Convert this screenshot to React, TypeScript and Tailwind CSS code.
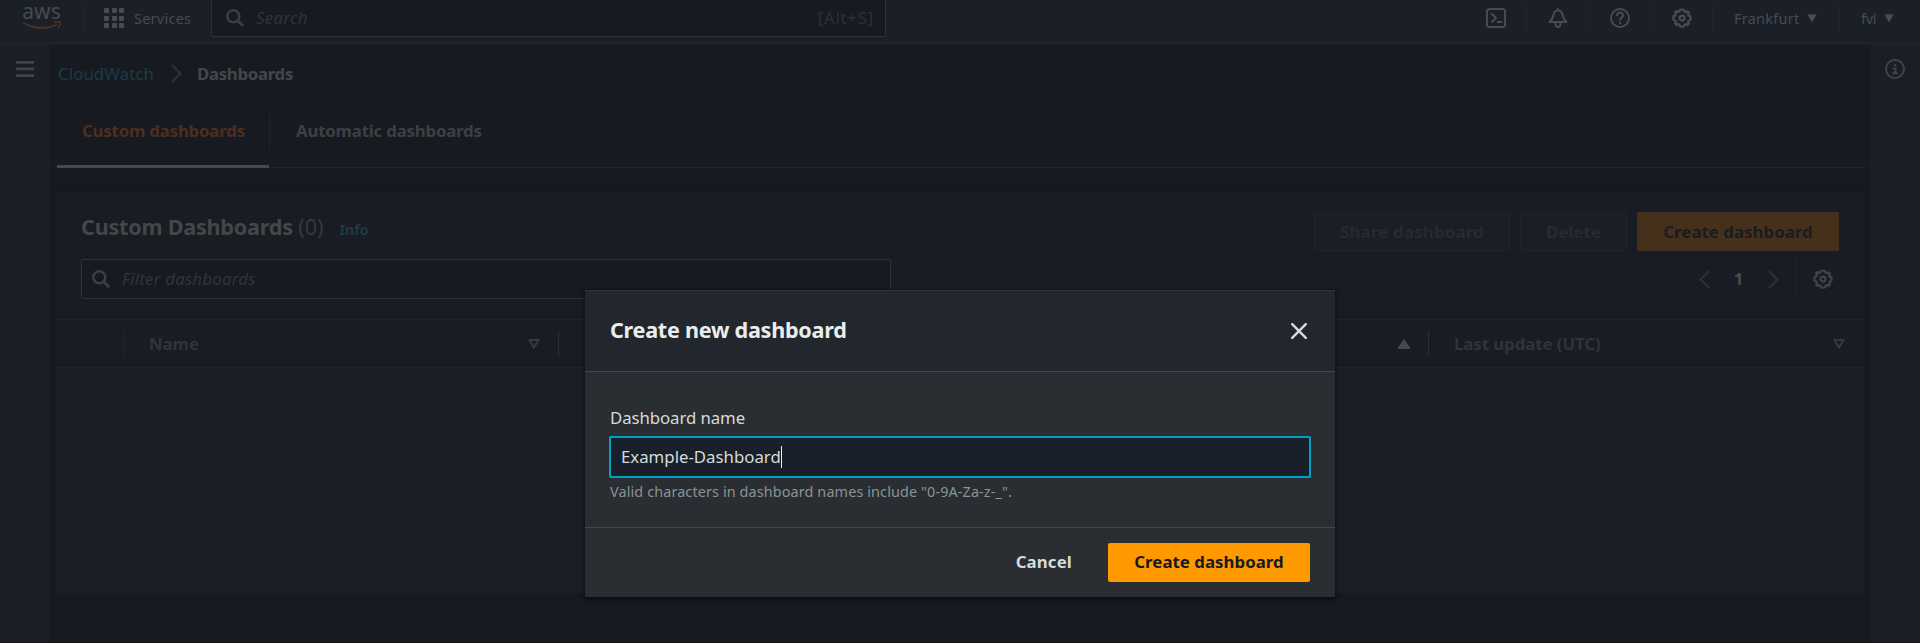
import type { ReactNode } from 'react';

const GEAR =
  'M8 1.2l1.5.3.5 1.3 1.1.5 1.3-.6 1.1 1.1-.6 1.3.5 1.1 1.3.5.3 1.3-.3 1.5-1.3.5-.5 1.1.6 1.3-1.1 1.1-1.3-.6-1.1.5-.5 1.3L8 15l-1.5-.3-.5-1.3-1.1-.5-1.3.6-1.1-1.1.6-1.3-.5-1.1-1.3-.5L1 8l.3-1.5 1.3-.5.5-1.1-.6-1.3 1.1-1.1 1.3.6L6 2.6l.5-1.1z';

function GearIcon({ className }: { className: string }) {
  return (
    <svg viewBox="0 0 16 16" className={`size-5 shrink-0 ${className}`} fill="none" stroke="currentColor" strokeWidth="1.8" strokeLinejoin="round">
      <path d={GEAR} />
      <circle cx="8" cy="8" r="2" />
    </svg>
  );
}

function SearchIcon({ className }: { className: string }) {
  return (
    <svg viewBox="0 0 18 18" className={`size-[18px] shrink-0 ${className}`} fill="none" stroke="currentColor" strokeWidth="2.4">
      <circle cx="7.3" cy="7.3" r="6" />
      <path d="M11.6 11.6L17 17" strokeWidth="2.8" />
    </svg>
  );
}

function Chevron({ left = false, className }: { left?: boolean; className: string }) {
  return (
    <svg viewBox="0 0 11 19" className={`h-[19px] w-[11px] shrink-0 ${className}`} fill="none" stroke="currentColor" strokeWidth="2.4">
      <path d={left ? 'M10 1L1.6 9.5L10 18' : 'M1 1L9.4 9.5L1 18'} />
    </svg>
  );
}

function SortDown() {
  return (
    <svg viewBox="0 0 12 10" className="h-2.5 w-3 shrink-0 text-[#373a3d]" fill="none" stroke="currentColor" strokeWidth="2" strokeLinejoin="round">
      <path d="M1.4 1H10.6L6 8.6z" />
    </svg>
  );
}

function CaretDown() {
  return (
    <svg viewBox="0 0 10 9" className="h-[9px] w-2.5 shrink-0" fill="currentColor">
      <path d="M.3 0.3H9.7L5 8.6z" />
    </svg>
  );
}

function NavItem({ className, children }: { className: string; children: ReactNode }) {
  return <div className={`flex h-7 items-center border-l border-[#20242b] ${className}`}>{children}</div>;
}

function TopBar() {
  return (
    <header className="flex h-11 shrink-0 items-start border-b border-[#22252d] bg-[#1b1f27] text-[#484b4f]">
      <div className="flex h-9 w-[83px] items-start pl-[22px]">
        <div className="flex w-[39px] flex-col items-center">
          <span className="h-[21px] text-[21px] leading-[22px] tracking-[0.1px]">aws</span>
          <svg viewBox="0 0 39 10" className="h-2.5 w-[39px] text-[#47351f]" fill="none" stroke="currentColor" strokeWidth="1.6">
            <path d="M.4 1.2C11 9.4 25 9.4 35 3.6C25 7.6 12 7.4 .4 1.2z" fill="currentColor" strokeWidth="1" />
            <path d="M32 1.2C35 .4 37.5 .6 38 1.2C38.4 2.2 37.6 5 35.8 7" />
          </svg>
        </div>
      </div>
      <div className="mt-1 flex h-7 w-[128px] items-center border-l border-[#23262d] pl-5">
        <div className="grid grid-cols-3 gap-[2.5px]">
          {Array.from({ length: 9 }, (_, i) => (
            <span key={i} className="size-[5px] rounded-[1px] bg-[#484b4f]" />
          ))}
        </div>
        <span className="pt-0.5 pl-2.5 text-[14.4px] leading-5 tracking-[0.3px]">Services</span>
      </div>
      <div className="flex h-[37px] w-[675px] items-center rounded-b-[2px] border border-t-0 border-[#303336] bg-[#171a20] pr-[11px] pl-[14px]">
        <SearchIcon className="text-[#3d4043]" />
        <span className="pl-3 text-[16.8px] leading-6 tracking-[0.3px] text-[#303438] italic">Search</span>
        <span className="ml-auto text-[16.8px] leading-6 tracking-[0.75px] text-[#2d3134]">[Alt+S]</span>
      </div>
      <div className="mt-1 ml-auto flex">
        <div className="flex h-7 w-[40px] items-center">
          <svg viewBox="0 0 20 20" className="size-5" fill="none" stroke="currentColor" strokeWidth="2">
            <rect x="1" y="1" width="18" height="18" rx="2.5" />
            <path d="M5.2 5.2L10 10L5.2 14.6M11 14H16" />
          </svg>
        </div>
        <NavItem className="w-[63px] pl-[21px]">
          <svg viewBox="0 0 20 20" className="size-5" fill="none" stroke="currentColor" strokeWidth="2" strokeLinejoin="round">
            <path d="M10 .2V2.5M1.4 14H18.6C16 12 15 10.4 14.6 7.2C14.2 4 12.6 2.4 10 2.4S5.8 4 5.4 7.2C5 10.4 4 12 1.4 14z" />
            <path d="M7.4 14.4C7.4 20.4 12.6 20.4 12.6 14.4" />
          </svg>
        </NavItem>
        <NavItem className="w-[61px] pl-5">
          <svg viewBox="0 0 20 20" className="size-5" fill="none" stroke="currentColor" strokeWidth="2">
            <circle cx="10" cy="10" r="9" />
            <path d="M6.9 8C6.9 3.8 13.1 3.9 13.1 7.6C13.1 9.8 10 9.6 10 12.4M10 13.8V16" />
          </svg>
        </NavItem>
        <NavItem className="w-[62px] pl-[21px]">
          <GearIcon className="" />
        </NavItem>
        <NavItem className="w-[127px] gap-2 pl-[21px]">
          <span className="pt-0.5 text-[14.4px] leading-5 tracking-[0.3px]">Frankfurt</span>
          <CaretDown />
        </NavItem>
        <NavItem className="w-[81px] gap-2 pl-[21px]">
          <span className="pt-0.5 text-[14.4px] leading-5 tracking-[-0.2px]">fvl</span>
          <CaretDown />
        </NavItem>
      </div>
    </header>
  );
}

function Breadcrumb() {
  return (
    <nav className="flex h-[58px] items-center pl-2 text-[16.8px] leading-6">
      <span className="w-[113px] pt-px tracking-[0.1px] text-[#1c3a46]">CloudWatch</span>
      <Chevron className="text-[#2c2f35]" />
      <span className="pt-px pl-[15px] font-bold tracking-[-0.3px] text-[#44474a]">Dashboards</span>
    </nav>
  );
}

function Tabs() {
  return (
    <div className="mr-[5px] ml-[5px] flex h-[66px] border-b border-[#20232b] text-[16.8px] leading-6 font-bold">
      <div className="ml-0.5 flex h-[66px] w-[212px] items-start border-b-[3px] border-[#47484c]">
        <div className="mt-[11px] flex h-[37px] w-[213px] shrink-0 items-center border-r border-[#20232b] pb-px pl-[25px] tracking-[-0.18px] text-[#4c2f1f]">
          Custom dashboards
        </div>
      </div>
      <div className="mt-[11px] flex h-[37px] items-center pb-px pl-[27px] tracking-[-0.18px] text-[#3d4043]">Automatic dashboards</div>
    </div>
  );
}

function HeaderCell({ label, className, children }: { label?: string; className: string; children?: ReactNode }) {
  return (
    <div className={`flex h-[25px] w-[435px] items-center border-l pr-[18px] pl-[25px] ${className}`}>
      <span className="tracking-[-0.05px]">{label}</span>
      <span className="ml-auto">{children}</span>
    </div>
  );
}

function DashboardsCard() {
  return (
    <section className="mx-1.5 mt-6 flex h-[401px] flex-col border-t border-[#1b1e25] bg-[#191c23] shadow-[0_0_6px_1px_#17191b]">
      <div className="flex h-[126px] flex-col pt-[19px] pr-[25px] pl-[25px]">
        <div className="flex h-[39px] items-center text-[16.8px] leading-6 font-bold">
          <h2 className="-mt-2.5 text-[21.6px] tracking-[-0.23px] text-[#44474a]">
            Custom Dashboards <span className="font-normal tracking-normal text-[#36393c]">(0)</span>
          </h2>
          <span className="-mt-1 pl-4 text-[14.4px] tracking-[-0.1px] text-[#1c3a46]">Info</span>
          <div className="ml-auto flex gap-2.5 text-[#272a2e]">
            <span className="flex h-[39px] w-[196px] items-center justify-center rounded-[2px] border border-[#20232a] bg-[#1b1e26]">
              <span className="tracking-[0.2px]">Share dashboard</span>
            </span>
            <span className="flex h-[39px] w-[107px] items-center justify-center rounded-[2px] border border-[#20232a] bg-[#1b1e26] tracking-[0.1px]">
              Delete
            </span>
            <span className="flex h-[39px] w-[202px] items-center justify-center rounded-[2px] bg-[#45311b] tracking-[0.05px] text-[#191c20]">
              Create dashboard
            </span>
          </div>
        </div>
        <div className="mt-2 flex h-10 items-center">
          <div className="flex h-10 w-[810px] items-center rounded-[2px] border border-[#303336] bg-[#171a21] pl-[10px]">
            <SearchIcon className="text-[#3d4043]" />
            <span className="pl-3 text-[16.8px] leading-6 tracking-[0.22px] text-[#303438] italic">Filter dashboards</span>
          </div>
          <div className="ml-auto flex h-10 items-center">
            <Chevron left className="text-[#2c2f35]" />
            <span className="w-[58px] pr-px text-center text-[16.8px] leading-6 font-bold text-[#4a4d50]">1</span>
            <Chevron className="text-[#2c2f35]" />
            <div className="ml-[17px] flex h-10 w-[43px] items-center border-l border-[#20232b] pl-4">
              <GearIcon className="text-[#414447]" />
            </div>
          </div>
        </div>
      </div>
      <div className="flex h-[49px] shrink-0 items-center border-y border-[#20232b] text-[16.8px] leading-6 font-bold text-[#303438]">
        <div className="w-[67px]" />
        <HeaderCell label="Name" className="border-[#22252c]">
          <SortDown />
        </HeaderCell>
        <HeaderCell className="border-[#2c2f35]" />
        <div className="flex h-[25px] w-[435px] items-center justify-end pt-px pr-[18px]">
          <svg viewBox="0 0 12 10" className="h-2.5 w-3 text-[#46494c]" fill="currentColor">
            <path d="M6 0L12 8.4V10H0V8.4z" />
          </svg>
        </div>
        <HeaderCell label="Last update (UTC)" className="border-[#2c2f35]">
          <SortDown />
        </HeaderCell>
      </div>
      <div className="flex-1 bg-[#1b1e26]" />
    </section>
  );
}

function CreateModal() {
  return (
    <div className="absolute inset-0 flex items-start justify-center pt-[290px]">
      <div className="flex h-[307px] w-[750px] flex-col bg-[#2a2d31] text-[16.8px] leading-6 text-[#d5dbdb] shadow-[0_1px_4px_1px_rgba(0,0,0,0.5)]">
        <div className="flex h-[82px] items-center justify-between border-t border-b border-t-[#2f3337] border-b-[#414750] bg-[#22262d] pr-7 pl-[25px]">
          <h1 className="pb-0.5 text-[21.6px] font-bold tracking-[-0.26px] text-[#eaeded]">Create new dashboard</h1>
          <svg viewBox="0 0 16 16" className="size-4" fill="none" stroke="currentColor" strokeWidth="2.4" strokeLinecap="round">
            <path d="M1.2 1.2L14.8 14.8M14.8 1.2L1.2 14.8" />
          </svg>
        </div>
        <div className="flex h-[156px] flex-col border-b border-[#44474b] px-6 pt-[34px]">
          <label className="h-[30px] pl-px tracking-[-0.08px]">Dashboard name</label>
          <div className="flex h-[42px] items-center rounded-[2px] border-2 border-[#00a1c9] bg-[#1a2029] pl-2.5">
            <span>Example-Dashboard</span>
            <span className="h-[22px] w-px bg-[#eaeded]" />
          </div>
          <p className="pt-1 pl-px text-[14.4px] leading-5 tracking-[0.12px] text-[#879596]">
            Valid characters in dashboard names include "0-9A-Za-z-_".
          </p>
        </div>
        <div className="flex flex-1 items-center justify-end pr-[25px] font-bold">
          <span className="pr-9 pb-0.5 tracking-[0.15px]">Cancel</span>
          <span className="flex h-[39px] w-[202px] items-center justify-center rounded-[2px] bg-[#ff9900] pb-0.5 tracking-[0.05px] text-[#16191f]">
            Create dashboard
          </span>
        </div>
      </div>
    </div>
  );
}

export default function App() {
  return (
    <div className="relative flex h-[643px] w-[1920px] flex-col overflow-hidden border-b border-[#121417] bg-[#171a21] font-['Noto_Sans',sans-serif]">
      <TopBar />
      <div className="flex flex-1">
        <aside className="flex w-[50px] justify-center bg-[#1b1e26] pt-[17px]">
          <svg viewBox="0 0 18 16" className="h-4 w-[18px] text-[#414447]" fill="currentColor">
            <path d="M0 0H18V2.7H0zM0 6.6H18V9.3H0zM0 13.2H18V15.9H0z" />
          </svg>
        </aside>
        <main className="w-[1820px]">
          <Breadcrumb />
          <Tabs />
          <DashboardsCard />
        </main>
        <aside className="flex w-[50px] justify-center bg-[#1b1e26] pt-[15px]">
          <svg viewBox="0 0 20 20" className="size-5 text-[#414447]" fill="none" stroke="currentColor" strokeWidth="2">
            <circle cx="10" cy="10" r="9" />
            <path d="M8.8 6.2H11.2M7.6 9.6H10.4V14M7.4 14.2H12.8" />
          </svg>
        </aside>
      </div>
      <CreateModal />
    </div>
  );
}
